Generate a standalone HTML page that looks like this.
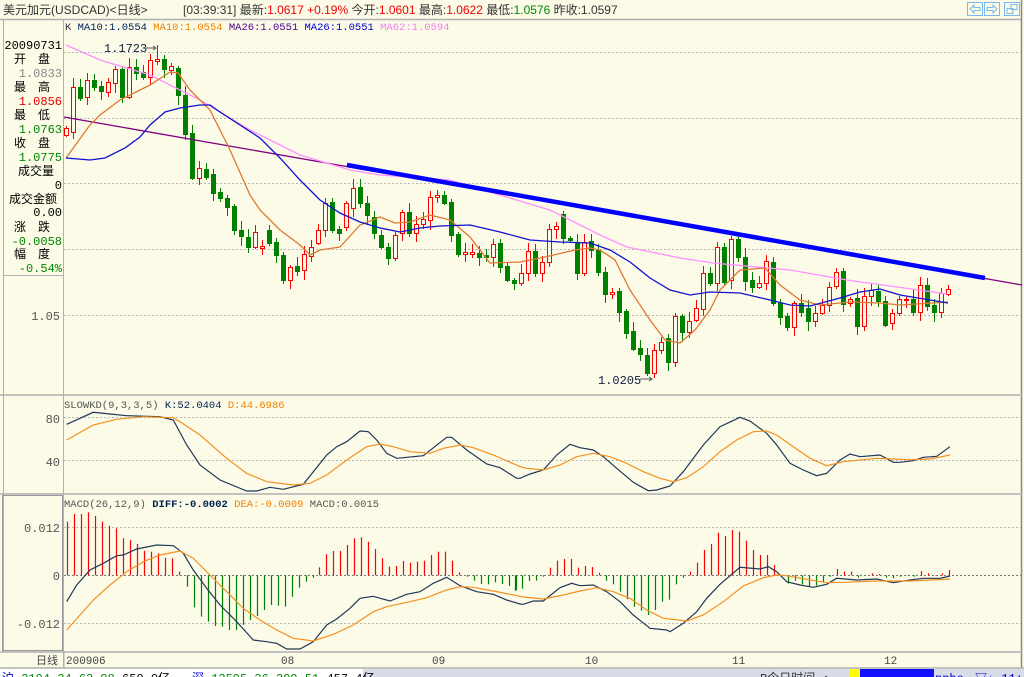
<!DOCTYPE html>
<html><head><meta charset="utf-8"><style>
html,body{margin:0;padding:0;background:#FBFBE8;}
svg{display:block;}
text{font-family:"Liberation Mono","Noto Sans CJK SC",monospace;}
.cj{font-family:"Liberation Sans","Noto Sans CJK SC",sans-serif;}
</style></head><body>
<svg id="s" width="1024" height="677" xmlns="http://www.w3.org/2000/svg">
<rect width="1024" height="677" fill="#FBFBE8"/>
<!-- top bar -->
<line x1="0" y1="19.5" x2="1022" y2="19.5" stroke="#B0B0B0" stroke-width="1.5"/>
<text x="3" y="14" font-size="12" fill="#333" class="cj">美元加元(USDCAD)&lt;日线&gt;</text>
<text x="183" y="14" font-size="12" class="cj" fill="#333">[03:39:31] 最新:<tspan fill="#E00">1.0617 +0.19%</tspan> 今开:<tspan fill="#E00">1.0601</tspan> 最高:<tspan fill="#E00">1.0622</tspan> 最低:<tspan fill="#080">1.0576</tspan> 昨收:1.0597</text>
<g fill="none" stroke="#7AB8F0" stroke-width="1">
<rect x="967.5" y="2.5" width="15" height="13"/><path d="M970 9l4-4v2.5h6v3h-6v2.5z"/>
<rect x="984.5" y="2.5" width="15" height="13"/><path d="M997 9l-4-4v2.5h-6v3h6v2.5z"/>
<rect x="1004.5" y="2.5" width="15" height="13"/><rect x="1011" y="4.5" width="6" height="5"/><rect x="1007" y="8.5" width="6" height="5"/>
</g>
<line x1="1021.5" y1="0" x2="1021.5" y2="668" stroke="#888" stroke-width="1.5"/>
<!-- left panel -->
<line x1="3.5" y1="20" x2="3.5" y2="652" stroke="#B0B0B0"/>
<line x1="63.5" y1="20" x2="63.5" y2="668" stroke="#B0B0B0"/>
<line x1="3" y1="275.5" x2="63" y2="275.5" stroke="#B0B0B0"/>
<g font-size="12" text-anchor="end" class="cj">
<text x="62" y="49" fill="#000">20090731</text>
<text x="50" y="63" fill="#000">开　盘</text>
<text x="62" y="77" fill="#888">1.0833</text>
<text x="50" y="91" fill="#000">最　高</text>
<text x="62" y="105" fill="#E00">1.0856</text>
<text x="50" y="119" fill="#000">最　低</text>
<text x="62" y="133" fill="#080">1.0763</text>
<text x="50" y="147" fill="#000">收　盘</text>
<text x="62" y="161" fill="#080">1.0775</text>
<text x="54" y="175" fill="#000">成交量</text>
<text x="62" y="189" fill="#000">0</text>
<text x="57" y="203" fill="#000">成交金额</text>
<text x="62" y="216" fill="#000">0.00</text>
<text x="50" y="231" fill="#000">涨　跌</text>
<text x="62" y="245" fill="#080">-0.0058</text>
<text x="50" y="258" fill="#000">幅　度</text>
<text x="62" y="272" fill="#080">-0.54%</text>
</g>
<g font-size="12" text-anchor="end" fill="#555" font-family="Liberation Sans,sans-serif">
<text x="60" y="320" font-family="Liberation Sans,sans-serif">1.05</text>
<text x="60" y="423" font-family="Liberation Sans,sans-serif">80</text>
<text x="60" y="466" font-family="Liberation Sans,sans-serif">40</text>
<text x="60" y="532" font-family="Liberation Sans,sans-serif">0.012</text>
<text x="60" y="580" font-family="Liberation Sans,sans-serif">0</text>
<text x="60" y="628" font-family="Liberation Sans,sans-serif">-0.012</text>
</g>
<rect x="2.5" y="495.5" width="60" height="155" fill="none" stroke="#999"/>
<!-- separators -->
<g stroke="#B0B0B0" stroke-width="1.5">
<line x1="0" y1="395" x2="1022" y2="395"/>
<line x1="0" y1="494" x2="1022" y2="494"/>
<line x1="0" y1="652" x2="1022" y2="652"/>
<line x1="0" y1="668" x2="1024" y2="668"/>
</g>
<!-- grid -->
<g stroke="#B8B8B8" stroke-dasharray="2,2">
<line x1="64" y1="52.5" x2="1021" y2="52.5"/><line x1="64" y1="118.5" x2="1021" y2="118.5"/>
<line x1="64" y1="183.5" x2="1021" y2="183.5"/><line x1="64" y1="249.5" x2="1021" y2="249.5"/>
<line x1="64" y1="315.5" x2="1021" y2="315.5"/>
<line x1="64" y1="417.5" x2="1021" y2="417.5"/><line x1="64" y1="460.5" x2="1021" y2="460.5"/>
<line x1="64" y1="527.5" x2="1021" y2="527.5"/><line x1="64" y1="575.5" x2="1021" y2="575.5" stroke="#777"/>
<line x1="64" y1="623.5" x2="1021" y2="623.5"/>
</g>
<!-- legends -->
<g font-size="10.5">
<text x="65" y="30" fill="#333">K <tspan fill="#002060">MA10:1.0554</tspan> <tspan fill="#F08000">MA10:1.0554</tspan> <tspan fill="#500090">MA26:1.0551</tspan> <tspan fill="#0000E0">MA26:1.0551</tspan> <tspan fill="#F080F0">MA62:1.0594</tspan></text>
<text x="64" y="408" fill="#555">SLOWKD(9,3,3,5) <tspan fill="#002050">K:52.0404</tspan> <tspan fill="#F08000">D:44.6986</tspan></text>
<text x="64" y="507" fill="#555">MACD(26,12,9) <tspan fill="#002050" font-weight="bold">DIFF:-0.0002</tspan> <tspan fill="#F08000">DEA:-0.0009</tspan> MACD:0.0015</text>
</g>
<text x="104" y="52" font-size="12" fill="#102040" font-family="Liberation Sans,sans-serif">1.1723</text>
<path d="M146 48h10m-3-2l3 2-3 2" stroke="#555" fill="none"/>
<text x="598" y="384" font-size="12" fill="#102040" font-family="Liberation Sans,sans-serif">1.0205</text>
<path d="M640 379h12m-3-2l3 2-3 2" stroke="#555" fill="none"/>
<!-- date axis -->
<g font-size="11" fill="#444">
<text x="36" y="664" class="cj">日线</text>
<text x="66" y="664">200906</text>
<text x="281" y="664">08</text><text x="432" y="664">09</text><text x="585" y="664">10</text><text x="732" y="664">11</text><text x="884" y="664">12</text>
</g>
<line x1="64" y1="652" x2="64" y2="668" stroke="#B0B0B0"/>
<!-- status bar -->
<rect x="0" y="669" width="1024" height="8" fill="#D8DCE8"/>
<rect x="0" y="669" width="188" height="8" fill="#fff"/>
<rect x="188" y="669" width="175" height="8" fill="#fff"/>
<rect x="850" y="669" width="84" height="8" fill="#1010FF"/>
<rect x="850" y="669" width="10" height="8" fill="#FF0"/>
<g font-size="12" class="cj">
<text x="2" y="682" fill="#00C">沪 <tspan fill="#080">3194.34</tspan> <tspan fill="#080">62.98</tspan> <tspan fill="#000">650.0亿</tspan></text>
<text x="192" y="682" fill="#00C">深 <tspan fill="#080">13595.36</tspan> <tspan fill="#080">299.51</tspan> <tspan fill="#000">457.4亿</tspan></text>
<text x="760" y="682" fill="#333">R今日时间 ↑</text>
<text x="935" y="682" fill="#00C">ppbo</text>
<text x="975" y="682" fill="#00C">▽↓ 11:20</text>
</g>
<g id="chart"></g>
</svg>
<script>
var NS="http://www.w3.org/2000/svg",g=document.getElementById("chart");
function el(n,a){var e=document.createElementNS(NS,n);for(var k in a)e.setAttribute(k,a[k]);g.appendChild(e);return e;}
var C="128,135,r|87,132,r|87,98,g|80,97,r|80,87,g|86,91,g|82,92,r|69,83,r|69,97,g|67,97,r|67,73,g|72,77,g|60,77,r|59,61,r|59,69,g|66,70,r|68,95,g|95,134,g|133,178,g|168,178,r|169,177,g|174,193,g|192,198,g|198,207,g|206,230,g|230,236,g|237,247,g|232,247,r|246,248,r|230,243,g|242,255,g|255,280,g|267,280,r|266,271,g|254,270,r|247,256,r|230,243,r|203,230,r|202,230,g|229,233,g|203,227,r|188,208,r|187,203,g|203,215,g|217,233,g|235,247,g|247,258,g|235,258,r|212,233,r|212,233,g|224,233,r|219,224,r|197,220,r|195,197,r|195,203,g|202,235,g|234,254,g|252,254,r|252,254,r|253,257,g|255,257,g|244,257,r|243,267,g|266,280,g|280,283,g|273,283,r|251,273,r|251,273,g|262,273,r|229,262,r|226,229,r|214,238,g|238,240,g|243,273,g|242,273,r|241,250,g|250,272,g|272,294,g|292,294,r|291,312,g|311,333,g|331,349,g|348,354,g|355,373,g|350,373,r|342,350,r|338,362,g|316,362,r|316,332,g|321,332,r|308,320,r|273,309,r|273,283,g|247,283,r|247,282,g|239,280,r|239,257,g|257,281,g|280,287,g|283,287,r|261,283,r|262,303,g|303,317,g|316,327,g|303,327,r|303,312,g|308,321,g|313,321,r|305,313,r|287,305,r|272,286,r|271,304,g|299,303,r|298,326,g|296,326,r|290,296,r|291,301,g|301,325,g|313,323,r|299,313,r|299,300,r|299,312,g|285,312,r|285,306,g|305,312,g|293,312,r|289,294,r".split("|");
C.forEach(function(s,i){var p=s.split(","),t=+p[0],b=+p[1],r=p[2]=="r",x=66+7*i;
var hi=t-(2+(i*7)%8),lo=b+(2+(i*5)%9);if(i==13)hi=45;if(i==84)lo=378;
var col=r?"#F00":"#008000";
el("line",{x1:x+.5,y1:hi,x2:x+.5,y2:lo,stroke:col});
if(b-t<1)b=t+1;
if(r)el("rect",{x:x-1.5,y:t+.5,width:4,height:b-t,fill:"#FBFBE8",stroke:col});
else el("rect",{x:x-2,y:t,width:5,height:b-t+1,fill:col});});
function pl(pts,col,w){el("polyline",{points:pts,fill:"none",stroke:col,"stroke-width":w||1.2});}
function zp(a,ox,oy){var o=[];for(var i=0;i<a.length;i+=2)o.push((ox+a[i]/3).toFixed(1)+","+(oy+a[i+1]/3).toFixed(1));return o.join(" ");}
pl("64,117 1022,285","#800080",1.3);
pl("66,45 100,60 150,75 200,100 250,130 300,155 350,170 380,175 450,180 500,195 550,210 600,235 627,247 680,258 713,263 790,270 847,280 947,294","#FF90FF",1.3);
pl("66,158 90,125 100,115 120,100 150,85 170,72 178,73 190,90 210,110 230,150 250,195 260,210 280,230 300,245 310,255 320,250 340,247 360,225 380,217 395,223 410,222 430,215 450,220 470,237 490,263 520,262 545,257 575,250 590,248 600,250 615,260 630,290 650,320 665,340 680,343 695,330 710,310 720,290 740,270 765,268 780,285 800,300 820,305 850,302 880,303 900,305 948,302","#E07830",1.3);
pl("66,158 90,160 105,158 125,148 140,137 150,125 165,112 180,108 200,105 210,105 220,112 240,125 260,138 280,158 300,180 320,200 340,213 360,222 380,228 400,232 420,228 440,226 470,225 500,232 530,240 560,242 590,243 610,250 630,262 650,278 670,290 690,295 710,292 740,293 770,300 790,305 810,306 840,298 860,292 880,289 900,295 948,303","#1010D0",1.3);
pl("347,165 985,278","#0000FF",4.5);
// KD
pl(zp([20,88,100,52,150,57,200,62,300,65,340,75,380,150,420,210,480,255,560,288,590,288,630,277,670,283,730,268,800,180,830,155,860,140,900,108,925,110,950,135,980,175,1010,190,1090,182,1160,127,1175,127,1220,165,1280,207,1320,218,1370,250],60,395)+" "+zp([30,250,60,237,100,225,140,180,180,148,210,158,250,165,280,185,320,220,370,262,415,287,440,285,480,273,520,230,580,150,630,95,690,67,720,78,770,115,800,150,840,205,880,225,920,242,950,235,990,195,1020,177,1050,185,1110,180,1150,202,1170,202,1210,197,1240,187,1280,184,1320,155],510,395),"#203858",1.2);
pl(zp([20,135,100,90,170,73,250,65,340,68,360,80,420,120,500,190,560,235,620,260,700,270,750,265,800,240,860,195,920,155,960,147,1000,155,1050,170,1110,175,1150,160,1200,150,1240,158,1300,180,1380,215],60,395)+" "+zp([50,220,100,225,150,210,200,185,250,175,300,185,350,205,400,230,450,250,490,260,530,248,580,215,630,170,680,135,730,110,770,108,800,120,850,155,900,190,950,212,1000,200,1100,190,1150,192,1200,194,1260,192,1320,180],510,395),"#F59020",1.2);
// MACD bars
function bars(vals,zx0,ox){vals.forEach(function(v,i){var x=Math.round(ox+(zx0+21*i)/3)+.5,y=395+v/3,z=575.3;
el("line",{x1:x,y1:Math.min(y,z),x2:x,y2:Math.max(y,z),stroke:v<541?"#F00":"#008000","stroke-width":1.2});});}
bars([380,357,357,352,363,380,393,400,430,435,447,467,470,475,488,490,530],22,60);
bars([575,637,665,680,693,695,705,705,690,675,663,645,630,632,635,605,578,560,548],380,60);
bars([517,478,468,468,450,430,427,440,462,490,515,513,498,503,500,497,480,470,470,497,532],778,60);
bars([545,557,567,568,562,567,573,585],1220,60);
bars([588,581,558,557,545,518,497,492,492,518,513,516,533,557,568,590,613,635,647,660,645,620,614,568,548,530,503,465,447,413,423,405,410,437,465,480,480,510,545,566,557,568,575,572,563,545,522,530,530,548,542,535,537,548,550,545,540,545,528,535,540,535,525],15,510);
pl(zp([20,620,50,570,90,525,130,505,170,482,190,480,230,462,290,450,340,452,370,475,400,525,440,580,480,630,530,680,580,735,620,740,650,745,680,762,720,762,760,740,800,690,830,672,870,640,900,610,940,604,990,618,1040,598,1080,590,1120,565,1160,547,1200,572,1250,590,1300,598,1340,615,1380,627],60,395)+" "+zp([40,628,70,618,100,618,150,578,185,565,210,572,250,570,290,590,330,620,370,660,420,700,470,705,480,710,520,685,560,650,590,610,630,568,690,517,750,522,775,515,800,530,830,560,870,570,910,577,950,568,980,550,1040,555,1100,552,1150,563,1200,555,1240,550,1290,550,1320,543],510,395),"#203858",1.2);
pl(zp([20,705,60,660,100,615,150,570,200,530,250,500,300,480,360,468,400,490,450,540,500,590,550,640,600,675,650,705,700,730,760,738,820,718,880,690,940,650,980,635,1050,620,1100,608,1160,585,1200,575,1240,577,1300,588,1380,604],60,395)+" "+zp([40,606,100,612,160,600,210,588,260,578,310,590,360,610,410,645,460,670,530,678,580,660,640,620,700,573,760,548,800,540,830,542,890,553,950,563,1000,562,1100,558,1200,558,1320,552],510,395),"#F59020",1.2);
</script>
</body></html>
